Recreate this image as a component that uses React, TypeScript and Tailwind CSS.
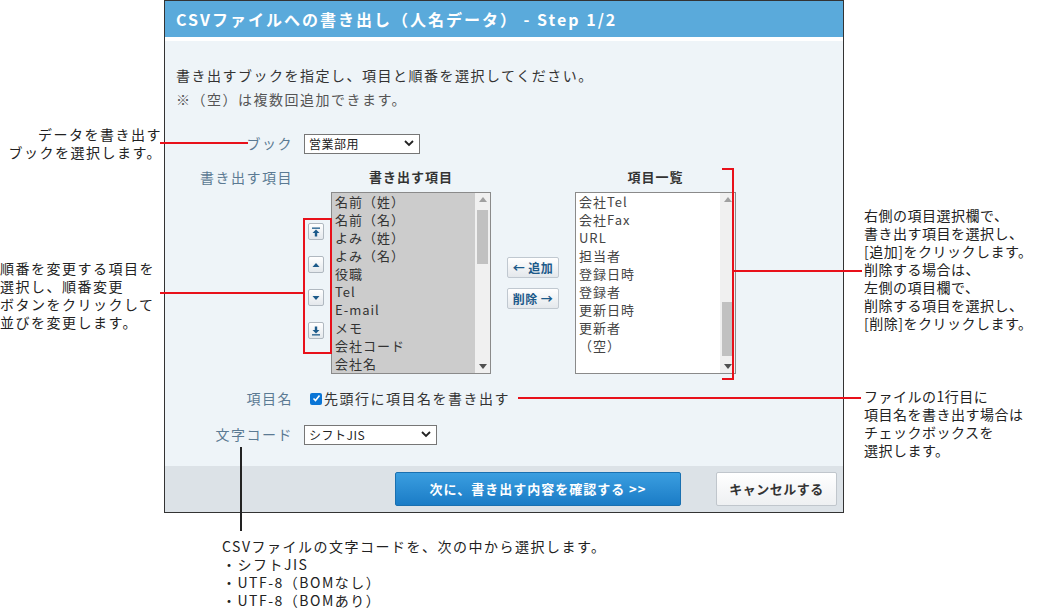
import React from "react"

const font = { fontFamily: '"Noto Sans CJK JP", "Noto Sans", sans-serif' }

const left = ["名前（姓）", "名前（名）", "よみ（姓）", "よみ（名）", "役職", "Tel", "E-mail", "メモ", "会社コード", "会社名"]
const right = ["会社Tel", "会社Fax", "URL", "担当者", "登録日時", "登録者", "更新日時", "更新者", "（空）"]

function Scroll({ thumbTop, thumbH }: { thumbTop: number; thumbH: number }) {
  return (
    <div className="relative w-[15px] shrink-0 bg-[#f0f0f0]">
      <div className="absolute left-[4px] top-[4px] h-0 w-0 border-x-[4px] border-b-[5px] border-x-transparent border-b-[#a0a0a0]" />
      <div className="absolute left-[2px] w-[11px] bg-[#c1c1c1]" style={{ top: thumbTop, height: thumbH }} />
      <div className="absolute bottom-[4px] left-[4px] h-0 w-0 border-x-[4px] border-t-[5px] border-x-transparent border-t-[#505050]" />
    </div>
  )
}

function Sel({ w, text }: { w: string; text: string }) {
  return (
    <div className={`${w} flex h-[20px] items-center justify-between border border-[#767676] bg-white pl-[4px] pr-[5px] text-[12px] tracking-[0.5px] text-[#222]`}>
      <span>{text}</span>
      <svg width="10" height="7" viewBox="0 0 10 7"><path d="M1 1l4 4 4-4" stroke="#222" strokeWidth="1.8" fill="none" /></svg>
    </div>
  )
}

function Arrow({ kind }: { kind: "top" | "up" | "down" | "bottom" }) {
  return (
    <div className="flex h-[17px] w-[16px] items-center justify-center rounded-[2px] border border-[#b0b8c0] bg-gradient-to-b from-white to-[#e4e8ec]">
      <svg width="10" height="10" viewBox="0 0 10 10" fill="#1c5a8a">
        {kind === "top" && <><rect x="1" y="0.5" width="8" height="1.3" /><path d="M5 2.5l3.5 3.5h-7z" /><rect x="3.8" y="5.5" width="2.4" height="4" /></>}
        {kind === "up" && <path d="M5 3l3.5 4h-7z" />}
        {kind === "down" && <path d="M5 7l3.5-4h-7z" />}
        {kind === "bottom" && <><rect x="3.8" y="0.5" width="2.4" height="4" /><path d="M5 7.5l3.5-3.5h-7z" /><rect x="1" y="8.2" width="8" height="1.3" /></>}
      </svg>
    </div>
  )
}

export default function App() {
  return (
    <div className="relative h-[608px] w-[1044px] bg-white tracking-[1.5px] text-[#333]" style={font}>
      <div className="ml-[164px] flex h-[513px] w-[680px] flex-col border border-[#333] bg-[#eef4f8]">
        <div className="flex h-[36px] items-center bg-[#5aaadb] px-[11px] text-[16px] font-bold tracking-[2px] text-white">
          CSVファイルへの書き出し（人名データ） - Step 1/2
        </div>
        <div className="h-[4px] bg-white" />
        <div className="flex-1 px-[11px] pt-[22px] text-[14px]">
          <p className="leading-[24px]">書き出すブックを指定し、項目と順番を選択してください。</p>
          <p className="leading-[24px] text-[#555]">※（空）は複数回追加できます。</p>
          <div className="mt-[22px] flex items-center">
            <span className="w-[128px] pr-[11px] text-right text-[#5b7a93]">ブック</span>
            <Sel w="w-[116px]" text="営業部用" />
          </div>
          <div className="mt-[10px] flex">
            <span className="w-[128px] pr-[11px] pt-[3px] text-right leading-[20px] text-[#5b7a93]">書き出す項目</span>
            <div className="flex flex-col items-center pt-[50px] pl-[4px]">
              <div className="flex h-[135px] flex-col justify-between pt-[9px] pb-[10px]">
                <Arrow kind="top" />
                <Arrow kind="up" />
                <Arrow kind="down" />
                <Arrow kind="bottom" />
              </div>
            </div>
            <div className="ml-[7px] flex flex-col items-center">
              <div className="h-[28px] pt-[3px] text-[13px] font-bold tracking-[1px]">書き出す項目</div>
              <div className="flex h-[182px] w-[160px] border border-[#8a8a8a] bg-[#cccccc]">
                <div className="flex-1 overflow-hidden pl-[3px] text-[13px] leading-[18px] tracking-[1px]">
                  {left.map((t) => <div key={t}>{t}</div>)}
                </div>
                <Scroll thumbTop={17} thumbH={54} />
              </div>
            </div>
            <div className="mx-[16px] flex flex-col gap-[10px] pt-[93px]">
              <div className="flex h-[21px] w-[52px] items-center justify-center rounded-[2px] border border-[#c0c8d0] bg-gradient-to-b from-white to-[#e4e8ec] text-[12px] font-bold tracking-[0.5px] text-[#1c5a8a]">← 追加</div>
              <div className="flex h-[21px] w-[52px] items-center justify-center rounded-[2px] border border-[#c0c8d0] bg-gradient-to-b from-white to-[#e4e8ec] text-[12px] font-bold tracking-[0.5px] text-[#1c5a8a]">削除 →</div>
            </div>
            <div className="flex flex-col items-center">
              <div className="h-[28px] pt-[3px] text-[13px] font-bold tracking-[1px]">項目一覧</div>
              <div className="flex h-[182px] w-[161px] border border-[#8a8a8a] bg-white">
                <div className="flex-1 overflow-hidden pl-[3px] text-[13px] leading-[18px] tracking-[1px] text-[#444]">
                  {right.map((t) => <div key={t}>{t}</div>)}
                </div>
                <Scroll thumbTop={109} thumbH={54} />
              </div>
            </div>
          </div>
          <div className="mt-[14px] flex items-center">
            <span className="w-[128px] pr-[11px] text-right text-[#5b7a93]">項目名</span>
            <span className="ml-[6px] mr-[2px] flex h-[12px] w-[12px] items-center justify-center rounded-[2px] bg-[#0a75d6]">
              <svg width="9" height="9" viewBox="0 0 9 9"><path d="M1.5 4.5l2 2 4-5" stroke="white" strokeWidth="1.6" fill="none" /></svg>
            </span>
            <span>先頭行に項目名を書き出す</span>
          </div>
          <div className="mt-[15px] flex items-center">
            <span className="w-[128px] pr-[11px] text-right text-[#5b7a93]">文字コード</span>
            <Sel w="w-[133px]" text="シフトJIS" />
          </div>
        </div>
        <div className="flex h-[46px] items-center justify-end gap-[35px] bg-[#dce2e7] pr-[6px]">
          <div className="flex h-[34px] w-[286px] items-center justify-center rounded-[2px] border border-[#1a70b0] bg-gradient-to-b from-[#3a9ee0] to-[#1a7cc6] text-[13px] font-bold tracking-[1px] text-white">次に、書き出す内容を確認する &gt;&gt;</div>
          <div className="flex h-[34px] w-[121px] items-center justify-center rounded-[2px] border border-[#c0c6cc] bg-gradient-to-b from-white to-[#eef0f2] text-[13px] font-bold tracking-[0.5px] text-[#333]">キャンセルする</div>
        </div>
      </div>

      {/* callouts */}
      <div className="absolute left-[6px] top-[125px] w-[156px] text-right text-[14px] leading-[18px] text-[#222]">データを書き出す<br />ブックを選択します。</div>
      <div className="absolute left-[160px] top-[142px] h-[2px] w-[88px] bg-[#e8101a]" />

      <div className="absolute left-[0px] top-[259px] text-[14px] leading-[18px] text-[#222]">順番を変更する項目を<br />選択し、順番変更<br />ボタンをクリックして<br />並びを変更します。</div>
      <div className="absolute left-[160px] top-[292px] h-[2px] w-[143px] bg-[#e8101a]" />
      <div className="absolute left-[303px] top-[218px] h-[136px] w-[29px] border-2 border-[#e8101a]" />

      <div className="absolute left-[722px] top-[168px] h-[212px] w-[12px] border-y-2 border-r-2 border-[#e8101a]" />
      <div className="absolute left-[734px] top-[270px] h-[2px] w-[128px] bg-[#e8101a]" />
      <div className="absolute left-[864px] top-[206px] text-[14px] leading-[18px] tracking-[0.5px] text-[#222]">右側の項目選択欄で、<br />書き出す項目を選択し、<br />[追加]をクリックします。<br />削除する場合は、<br />左側の項目欄で、<br />削除する項目を選択し、<br />[削除]をクリックします。</div>

      <div className="absolute left-[518px] top-[397px] h-[2px] w-[343px] bg-[#e8101a]" />
      <div className="absolute left-[864px] top-[387px] text-[14px] leading-[18px] tracking-[0.5px] text-[#222]">ファイルの1行目に<br />項目名を書き出す場合は<br />チェックボックスを<br />選択します。</div>

      <div className="absolute left-[240px] top-[447px] h-[84px] w-[2px] bg-[#222]" />
      <div className="absolute left-[222px] top-[537px] text-[14px] leading-[18px] text-[#222]">CSVファイルの文字コードを、次の中から選択します。<br />・シフトJIS<br />・UTF-8（BOMなし）<br />・UTF-8（BOMあり）</div>
    </div>
  )
}
